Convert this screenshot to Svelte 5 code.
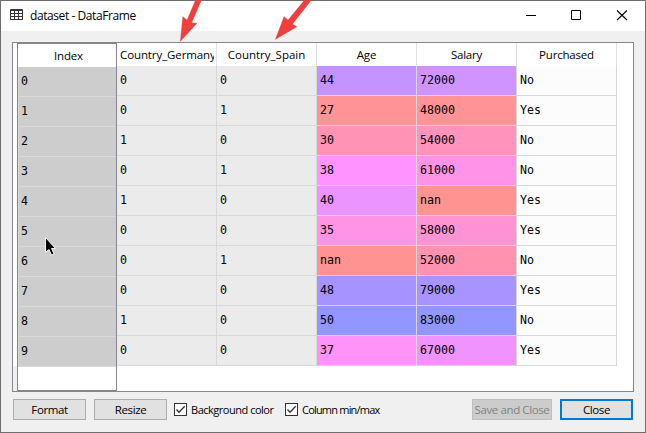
<script>
  const columns = [
    { name: 'Country_Germany', spacing: -0.1 },
    { name: 'Country_Spain', spacing: 0 },
    { name: 'Age', spacing: -0.1 },
    { name: 'Salary', spacing: -0.25 },
    { name: 'Purchased', spacing: -0.2 }
  ];
  const rows = [
    ['0', '0', '44', '72000', 'No', '#c593ff', '#d193ff'],
    ['0', '1', '27', '48000', 'Yes', '#ff9396', '#ff9396'],
    ['1', '0', '30', '54000', 'No', '#ff93b5', '#ff93bb'],
    ['0', '1', '38', '61000', 'No', '#ff93ff', '#ff93e7'],
    ['1', '0', '40', 'nan', 'Yes', '#eb93ff', '#ff9391'],
    ['0', '0', '35', '58000', 'Yes', '#ff93e4', '#ff93d4'],
    ['0', '1', 'nan', '52000', 'No', '#ff9391', '#ff93af'],
    ['0', '0', '48', '79000', 'Yes', '#a693ff', '#a893ff'],
    ['1', '0', '50', '83000', 'No', '#9396ff', '#9396ff'],
    ['0', '0', '37', '67000', 'Yes', '#ff93f8', '#f193ff']
  ];
  const fill = (row, c) => (c < 2 ? '#ebebeb' : c === 4 ? '#fcfcfc' : row[c + 3]);
</script>

{#snippet check(label, spacing)}
  <label class="check">
    <svg width="13" height="13" viewBox="0 0 13 13">
      <rect x=".5" y=".5" width="12" height="12" fill="#fff" stroke="#333" />
      <path d="M2.5 6.5 5 9.2 10.7 3.3" fill="none" stroke="#333" stroke-width="1.3" />
    </svg>
    <span style:letter-spacing="{spacing}px">{label}</span>
  </label>
{/snippet}

<div class="window">
  <header>
    <svg width="13" height="14" viewBox="0 0 13 14">
      <rect width="13" height="11" rx="1" fill="#333" />
      <path d="M1 2h3v2H1zM5 2h3v2H5zM9 2h3v2H9zM1 5h3v2H1zM5 5h3v2H5zM9 5h3v2H9zM1 8h3v2H1zM5 8h3v2H5zM9 8h3v2H9z" fill="#fff" />
    </svg>
    <span class="title">dataset - DataFrame</span>
    <svg class="controls" width="102" height="12" viewBox="0 0 102 12">
      <path d="M0 5.5h10M45.500 .5h9v9h-9z" fill="none" stroke="#000" />
      <path d="m91 .5 10 9.500M101 .5 91 10" fill="none" stroke="#000" stroke-width="1.100" />
    </svg>
  </header>

  <main>
    <div class="gutter"></div>
    <div class="index">
      <div class="index-head">Index</div>
      {#each rows as _, i}
        <div class="index-cell">{i}</div>
      {/each}
    </div>
    <div class="table">
      <div class="row head">
        {#each columns as col}
          <div class="th"><span style:letter-spacing="{col.spacing}px">{col.name}</span></div>
        {/each}
      </div>
      {#each rows as row}
        <div class="row">
          {#each columns as _, c}
            <div class="td" style:background={fill(row, c)}>{row[c]}</div>
          {/each}
        </div>
      {/each}
    </div>
  </main>

  <footer>
    <button>Format</button>
    <button class="resize">Resize</button>
    {@render check('Background color', -0.48)}
    {@render check('Column min/max', -0.8)}
    <button class="save" disabled>Save and Close</button>
    <button class="close">Close</button>
  </footer>

  <svg class="overlay" width="646" height="433" viewBox="0 0 646 433">
    <g fill="#f53d3d" stroke="#aa6666" stroke-opacity=".5" stroke-width=".6">
      <path d="M195.500 0 187 20 182.700 16.500 180.300 41.500 197 23.300 191.700 22.800 201.500 0z" />
      <path d="M304.500 0 288 20 284 16.500 275.300 39.500 297 26.700 292.500 24 311.500 0z" />
    </g>
    <path d="M45.500 237.500v15l3.500-3 2.500 5.500 2.500-1-2.500-5.500h4z" fill="#000" stroke="#fff" stroke-width=".9" />
  </svg>
</div>

<style>
  :global(body) { margin: 0; overflow: hidden; }
  * { box-sizing: border-box; }
  .window {
    position: relative; width: 646px; height: 433px; display: flex; flex-direction: column;
    background: #f0f0f0; border: 1px solid #6d6d6d;
    font: 11.5px/16px "Open Sans", "Noto Sans", sans-serif; color: #000;
  }
  header { height: 30px; flex: none; display: flex; align-items: center; background: #fff; padding: 0 17px 0 9px; }
  .title { font-size: 12px; margin-left: 7px; letter-spacing: -.42px; }
  .controls { margin-left: auto; }
  main {
    width: 622px; height: 350px; margin: 11px 0 0 11px; flex: none; display: flex;
    background: #fff; border: 1px solid #828790;
  }
  .gutter { width: 4px; background: linear-gradient(#fff 323px, #f0f0f0 323px); }
  .index { width: 100px; height: 348px; border: 1px solid #828790; }
  .index-head { height: 23px; display: flex; align-items: center; justify-content: center; padding: 1px 0 0 3px; letter-spacing: -.2px; }
  .index-cell {
    height: 30px; background: #cdcdcd; border-bottom: 1px solid #d9d9d9; border-left: 1px solid #d9d9d9;
    padding: 6px 0 0 2px;
  }
  .index-cell, .td { font: 11.63px/16px "DejaVu Sans Mono", monospace; }
  .table { width: 500px; }
  .row { display: flex; }
  .head { height: 23px; }
  .th {
    width: 100px; border-right: 1px solid #e2e2e2; display: flex; align-items: center; justify-content: center;
    white-space: nowrap; overflow: hidden;
  }
  .th:first-child { justify-content: flex-start; padding-left: 3px; }
  .th:first-child span { width: 94px; overflow: hidden; }
  .td { width: 100px; height: 30px; padding: 6px 0 0 3px; border-right: 1px solid #d8d8d8; border-bottom: 1px solid #d8d8d8; }
  footer { display: flex; margin: 7px 0 0 12px; width: 620px; height: 21px; align-items: center; }
  button {
    font: inherit; color: #000; width: 73px; height: 21px; padding: 0; background: #e1e1e1;
    border: 1px solid #adadad; white-space: nowrap; line-height: 18px; letter-spacing: -.4px;
  }
  .resize { margin: 0 7px 0 8px; }
  .check { display: flex; align-items: center; gap: 4px; width: 111px; white-space: nowrap; font-size: 11px; }
  .save { width: 80px; margin-left: auto; background: #ccc; border-color: #bfbfbf; color: #838383; }
  .close { margin-left: 8px; border: 2px solid #0078d7; line-height: 16px; }
  .overlay { position: absolute; left: -1px; top: -1px; pointer-events: none; }
</style>
